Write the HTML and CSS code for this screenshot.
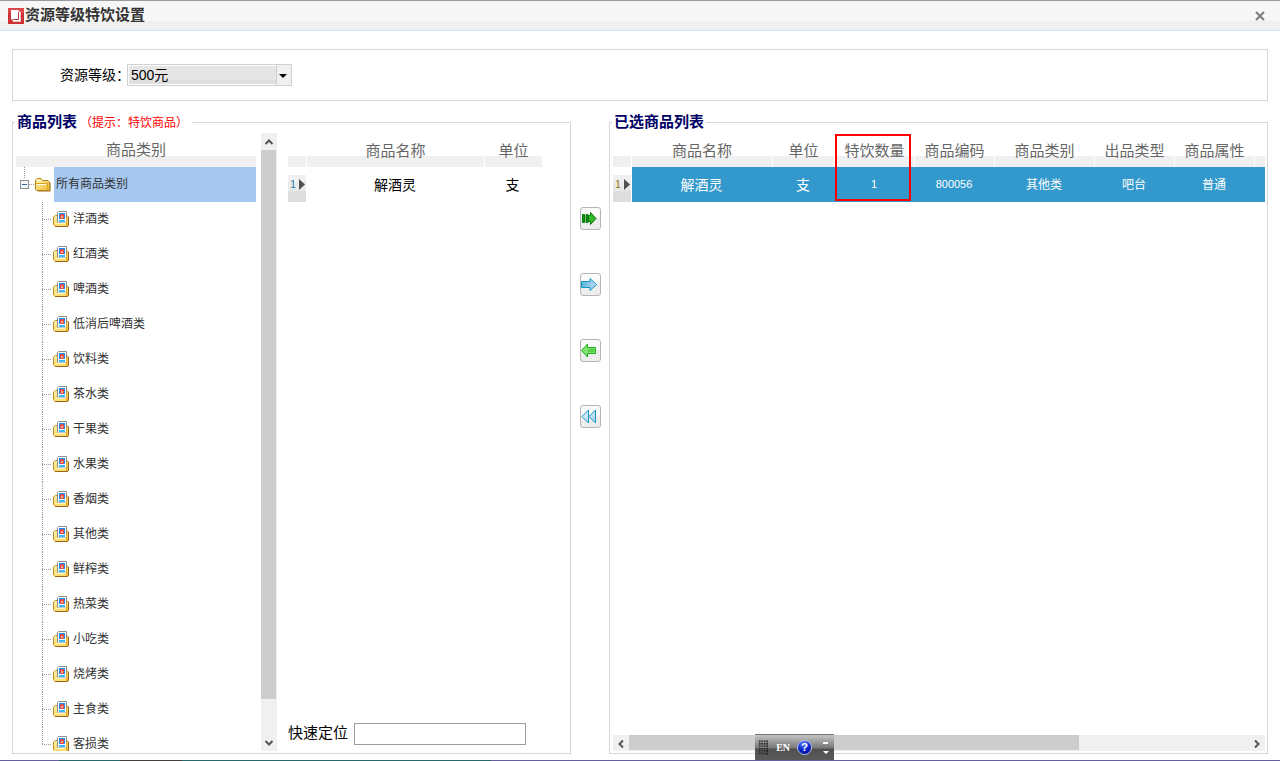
FILE: index.html
```html
<!DOCTYPE html>
<html lang="zh-CN">
<head>
<meta charset="utf-8">
<title>资源等级特饮设置</title>
<link rel="stylesheet" href="styles.css">
</head>
<body>
<svg width="0" height="0" class="defs" aria-hidden="true">
  <defs>
    <linearGradient id="gold" x1="0" y1="0" x2="1" y2="1"><stop offset="0" stop-color="#fff9b8"/><stop offset="1" stop-color="#f0b92c"/></linearGradient>
    <linearGradient id="sky" x1="0" y1="0" x2="1" y2="0"><stop offset="0" stop-color="#56b4d4"/><stop offset="1" stop-color="#c5dcf8"/></linearGradient>
    <linearGradient id="pale" x1="0" y1="0" x2="1" y2="1"><stop offset="0" stop-color="#e6f4fc"/><stop offset="1" stop-color="#a8cdf0"/></linearGradient>
    <symbol id="folder" viewBox="0 0 16 16">
      <path d="M2 13.500H14.500V5.500L15.500 6V14.500H3z" fill="#9a6c1c"/>
      <path d="M.5 12.500V3L2 1.500H6L7.500 3.500H13L14.500 5V13.500H1.500z" fill="url(#gold)" stroke="#b5831e"/>
      <path d="M1 6.500H12.500V12.500" fill="none" stroke="#dba726"/>
      <path d="M2 3.500H6M2 7.500H11" stroke="#fffde0"/>
    </symbol>
    <symbol id="category" viewBox="0 0 16 16">
      <path d="M.5 13.500V6L2.500 4.500H14L15.500 6V14L14.500 15.500H2z" fill="url(#gold)" stroke="#c08a20"/>
      <path d="M5.500 .5H13.500V12H4.500V1.500z" fill="#fff" stroke="#8c8c8c"/>
      <path d="M6 2H12V8H6z" fill="#1c8cf8"/>
      <path d="M7 4L8 3H10L11 4V7L10 8H8L7 7z" fill="#f04a38"/><path d="M8 5H10V7H8z" fill="#ffa090"/>
      <path d="M6 9H12V11H6z" fill="#38b8f4"/>
      <path d="M1 11H4L5 12H13V15H2L1 14z" fill="#ffdf70"/>
      <path d="M2 12.500H12" stroke="#fff6bd"/>
      <path d="M13.500 7V14" stroke="#e2b03c"/>
      <path d="M2 15.500H14.500L15.500 14.500V6" fill="none" stroke="#9a651b"/>
    </symbol>
    <symbol id="chev" viewBox="0 0 10 10"><path d="M1.500 7L5 3.500L8.500 7" fill="none" stroke="#555" stroke-width="2"/></symbol>
  </defs>
</svg>
<div class="window">
  <header class="titlebar">
    <svg class="logo" viewBox="0 0 16 16" aria-hidden="true"><path d="M0 0H16V16H0z" fill="#cf3236"/><path d="M0 0H16V5H0z" fill="#dc484a"/><path d="M3 2H10L12 4V13H5L3 11z" fill="#fff"/><path d="M10.500 4V11.500H4.500" fill="none" stroke="#b9383c"/><path d="M12.500 4V13.500H5" fill="none" stroke="#f1c6c6"/></svg>
    <h1 class="title">资源等级特饮设置</h1>
    <button class="close" type="button" aria-label="关闭"><svg viewBox="0 0 10 10"><path d="M1 1L9 9M9 1L1 9" stroke="#808080" stroke-width="2.200"/></svg></button>
  </header>
  <main class="content">
    <section class="filter">
      <label for="level">资源等级：</label>
      <div class="combo">
        <select id="level"><option>500元</option></select>
        <svg class="combo-arrow" viewBox="0 0 15 20" aria-hidden="true"><path d="M0 0H15V20H0z" fill="#f0f0f0"/><path d="M.5 0V20" stroke="#d0d0d0"/><path d="M3 9H11L7 13z" fill="#000"/></svg>
      </div>
    </section>
    <div class="panels">
      <fieldset class="panel source">
        <legend>商品列表<span class="hint">（提示：特饮商品）</span></legend>
        <div class="source-body">
          <div class="tree">
            <div class="tree-head">商品类别</div>
            <div class="tree-root"><svg class="root-branch" viewBox="0 0 19 35" aria-hidden="true"><path d="M8.500 0V12M13 17.500H18" fill="none" stroke="#999" stroke-dasharray="1 1"/><rect x="4.500" y="13.500" width="8" height="8" fill="#f5f7f9" stroke="#8c9096"/><path d="M6 17.500H11" stroke="#345e9e"/></svg><svg class="icon" aria-hidden="true"><use href="#folder"/></svg><span class="root-name">所有商品类别</span></div>
            <ul class="tree-list">
              <li><svg class="icon" aria-hidden="true"><use href="#category"/></svg>洋酒类</li>
              <li><svg class="icon" aria-hidden="true"><use href="#category"/></svg>红酒类</li>
              <li><svg class="icon" aria-hidden="true"><use href="#category"/></svg>啤酒类</li>
              <li><svg class="icon" aria-hidden="true"><use href="#category"/></svg>低消后啤酒类</li>
              <li><svg class="icon" aria-hidden="true"><use href="#category"/></svg>饮料类</li>
              <li><svg class="icon" aria-hidden="true"><use href="#category"/></svg>茶水类</li>
              <li><svg class="icon" aria-hidden="true"><use href="#category"/></svg>干果类</li>
              <li><svg class="icon" aria-hidden="true"><use href="#category"/></svg>水果类</li>
              <li><svg class="icon" aria-hidden="true"><use href="#category"/></svg>香烟类</li>
              <li><svg class="icon" aria-hidden="true"><use href="#category"/></svg>其他类</li>
              <li><svg class="icon" aria-hidden="true"><use href="#category"/></svg>鲜榨类</li>
              <li><svg class="icon" aria-hidden="true"><use href="#category"/></svg>热菜类</li>
              <li><svg class="icon" aria-hidden="true"><use href="#category"/></svg>小吃类</li>
              <li><svg class="icon" aria-hidden="true"><use href="#category"/></svg>烧烤类</li>
              <li><svg class="icon" aria-hidden="true"><use href="#category"/></svg>主食类</li>
              <li><svg class="icon" aria-hidden="true"><use href="#category"/></svg>客损类</li>
            </ul>
          </div>
          <div class="vscroll" aria-hidden="true">
            <span class="arrow"><svg><use href="#chev"/></svg></span>
            <span class="track"><span class="thumb"></span></span>
            <span class="arrow down"><svg><use href="#chev"/></svg></span>
          </div>
          <div class="goods">
            <table class="grid">
              <colgroup><col class="w-mark"><col class="w-goods"><col class="w-goods-unit"></colgroup>
              <thead><tr><th></th><th>商品名称</th><th>单位</th></tr></thead>
              <tbody><tr><td class="mark"><span class="marker"><span class="num">1</span><svg viewBox="0 0 6 11"><path d="M0 0L6 5.500L0 11z" fill="#505050"/></svg></span></td><td>解酒灵</td><td>支</td></tr></tbody>
            </table>
            <div class="locate"><label for="quick">快速定位</label><input id="quick" type="text"></div>
          </div>
        </div>
      </fieldset>
      <div class="transfer">
        <button type="button" aria-label="添加"><svg viewBox="0 0 17 17"><path d="M1.500 4.500H3.500V12.500H1.500zM5 4.500H7V12.500H5z" fill="#0a9410" stroke="#067a0a"/><path d="M7.500 5.500H9.500V2.500L15 8.500L9.500 14.500V11.500H7.500z" fill="#36b62c" stroke="#087c0c"/></svg></button>
        <button type="button" aria-label="全部添加"><svg viewBox="0 0 17 17"><path d="M.5 5.500H9V2.500L15.500 8.500L9 14.500V11.500H.5z" fill="url(#sky)" stroke="#1598c4"/></svg></button>
        <button type="button" aria-label="移除"><svg viewBox="0 0 17 17"><path d="M14.500 5.500H6.500V2L.5 8.500L6.500 15V11.500H14.500z" fill="#80e070" stroke="#18ae1c"/><path d="M7 7H13V10H7z" fill="#58d043"/></svg></button>
        <button type="button" aria-label="全部移除"><svg viewBox="0 0 17 17"><path d="M7.500 2V15L1 8.500zM14.500 2V15L8 8.500z" fill="url(#pale)" stroke="#1598c4"/></svg></button>
      </div>
      <fieldset class="panel chosen">
        <legend>已选商品列表</legend>
        <div class="chosen-body">
          <table class="grid">
            <colgroup><col class="w-mark"><col class="w-name"><col class="w-unit"><col class="w-80"><col class="w-80"><col class="w-100"><col class="w-80"><col class="w-80"><col class="w-rest"></colgroup>
            <thead><tr><th></th><th>商品名称</th><th>单位</th><th class="key">特饮数量<span class="outline"></span></th><th>商品编码</th><th>商品类别</th><th>出品类型</th><th>商品属性</th><th></th></tr></thead>
            <tbody><tr class="selected"><td class="mark"><span class="marker"><span class="num gold">1</span><svg viewBox="0 0 6 11"><path d="M0 0L6 5.500L0 11z" fill="#505050"/></svg></span></td><td>解酒灵</td><td>支</td><td class="digits">1</td><td class="digits">800056</td><td class="small">其他类</td><td class="small">吧台</td><td class="small">普通</td><td></td></tr></tbody>
          </table>
          <div class="hscroll" aria-hidden="true">
            <span class="arrow left"><svg><use href="#chev"/></svg></span>
            <span class="track"><span class="thumb"></span></span>
            <span class="arrow right"><svg><use href="#chev"/></svg></span>
          </div>
        </div>
      </fieldset>
    </div>
  </main>
  <div class="desktop-edge"></div>
  <div class="langbar">
    <svg class="grip" viewBox="0 0 11 17" aria-hidden="true"><path d="M1 0V17M4 0V17M7 0V17M10 0V17" stroke="#222" stroke-width="2" stroke-dasharray="2 1"/><path d="M1.500 1V17M4.500 1V17M7.500 1V17" stroke="#8a8a8a" stroke-dasharray="1 2"/></svg>
    <span class="lang">EN</span>
    <button class="help" type="button" aria-label="帮助">?</button>
    <svg class="bar-menu" viewBox="0 0 6 14" aria-hidden="true"><path d="M0 1H5V3H0zM0 10H6L3 13z" fill="#fff"/></svg>
  </div>
</div>
</body>
</html>
```
FILE: styles.css
```css
* { box-sizing: border-box; }
body {
  margin: 0;
  background: #fff;
  color: #000;
  font-family: "Liberation Sans", "Noto Sans CJK SC", sans-serif;
  font-size: 14px;
}
button, input, select { font: inherit; }
svg { display: block; }
.defs { position: absolute; }
.window {
  position: relative;
  display: flex;
  flex-direction: column;
  height: 100vh;
}

/* Title bar */
.titlebar {
  display: flex;
  align-items: center;
  height: 31px;
  padding: 0 15px 0 8px;
  border-top: 1px solid #9c9ba3;
  border-bottom: 1px solid #caebfd;
  background: linear-gradient(#f7f7f7 20px, #f0f0f0 20px);
}
.logo { width: 16px; height: 16px; }
.title {
  flex: 1;
  margin: 0 0 0 1px;
  padding-bottom: 2px;
  color: #333;
  font-size: 15px;
  line-height: 20px;
}
.close {
  width: 10px;
  height: 10px;
  padding: 0;
  border: 0;
  background: none;
}

/* Level filter */
.content {
  display: flex;
  flex: 1;
  flex-direction: column;
  min-height: 0;
  padding: 18px 12px 6px;
}
.filter {
  display: flex;
  align-items: center;
  height: 52px;
  padding-left: 47px;
  border: 1px solid #d6d6d6;
}
.filter label { width: 67px; padding-bottom: 2px; white-space: nowrap; }
.combo { position: relative; width: 165px; height: 22px; }
.combo select {
  width: 100%;
  height: 22px;
  padding: 0 20px 0 3px;
  border: 1px solid #d0d0d0;
  border-radius: 0;
  appearance: none;
  background: linear-gradient(#e5e5e5 15px, #dfdfdf 15px);
  box-shadow: inset 0 0 0 1px #fff;
  color: #000;
}
.combo-arrow {
  position: absolute;
  top: 1px;
  right: 1px;
  width: 15px;
  height: 20px;
  pointer-events: none;
}

/* Panels */
.panels {
  display: flex;
  flex: 1;
  min-height: 0;
  padding-top: 11px;
}
.panel {
  display: flex;
  min-width: 0;
  min-height: 0;
  margin: 0;
  padding: 0 2px 2px;
  border: 1px solid #d6d6d6;
}
.source { flex: 559 1 559px; }
.chosen { flex: 659 1 659px; }
legend {
  height: 21px;
  padding: 0 2px;
  color: #000066;
  font-size: 15px;
  font-weight: bold;
  line-height: 20px;
}
.hint {
  padding: 0 2px 0 3px;
  color: #f00;
  font-size: 12px;
  font-weight: normal;
  line-height: 12px;
}
.source-body {
  display: flex;
  flex: 1;
  min-width: 0;
  min-height: 0;
  padding-left: 1px;
}

/* Category tree */
.tree {
  flex: 240 1 240px;
  min-height: 0;
  overflow: hidden;
  color: #333;
  font-size: 12px;
}
.tree-head {
  height: 34px;
  background: linear-gradient(#fff 23px, #f0f0f0 23px);
  color: #666;
  font-size: 15px;
  line-height: 34px;
  text-align: center;
}
.tree-root { display: flex; align-items: center; height: 35px; }
.root-branch { width: 19px; height: 35px; }
.icon { flex: none; width: 16px; height: 16px; }
.root-name {
  flex: 1;
  margin-left: 3px;
  padding-left: 2px;
  background: #a6c8f0;
  line-height: 35px;
}
.tree-list { margin: 0; padding: 0 0 0 26px; list-style: none; }
.tree-list li {
  display: flex;
  align-items: center;
  gap: 4px;
  height: 35px;
  padding: 0 0 2px 11px;
  background:
    repeating-linear-gradient(#999 0 1px, transparent 1px 2px) 0 0 / 1px 100% no-repeat,
    repeating-linear-gradient(90deg, #999 0 1px, transparent 1px 2px) 0 17px / 9px 1px no-repeat;
  line-height: 14px;
}
.tree-list li:last-child { background-size: 1px 17px, 9px 1px; }

/* Scroll bars */
.vscroll {
  display: flex;
  flex: none;
  flex-direction: column;
  width: 16px;
  margin: 0 11px 0 5px;
  background: #f0f0f0;
}
.arrow { display: grid; place-items: center; width: 16px; height: 17px; }
.arrow svg { width: 10px; height: 10px; }
.down svg { transform: rotate(180deg); }
.left svg { transform: rotate(-90deg); }
.right svg { transform: rotate(90deg); }
.track { flex: 1; }
.thumb { display: block; background: #cdcdcd; }
.vscroll .thumb { width: 15px; height: 94%; }
.hscroll { display: flex; height: 16px; background: #f0f0f0; }
.hscroll .thumb { width: 72.500%; height: 15px; }

/* Product grids */
.goods {
  display: flex;
  flex: 254 1 254px;
  flex-direction: column;
  justify-content: space-between;
  margin-right: 26px;
}
.grid {
  width: 100%;
  border-spacing: 0;
  table-layout: fixed;
}
.w-mark { width: 19px; }
.w-goods { width: 178px; }
.w-goods-unit { width: 57px; }
.w-name { width: 141px; }
.w-unit { width: 62px; }
.w-80 { width: 80px; }
.w-100 { width: 100px; }
.w-rest { width: 10px; }
.grid th {
  height: 34px;
  padding: 0 0 2px;
  border-right: 1px solid #fff;
  background: linear-gradient(#fff 23px, #f0f0f0 23px);
  color: #666;
  font-size: 15px;
  font-weight: normal;
  white-space: nowrap;
}
.grid th:last-child { border-right: 0; }
.grid td { height: 35px; padding: 0 2px 2px 0; text-align: center; }
.grid .mark { padding: 0 1px 0 0; background: #fff; vertical-align: bottom; }
.marker {
  display: flex;
  align-items: flex-start;
  gap: 3px;
  height: 27px;
  padding: 4px 1px 0 2px;
  background: linear-gradient(#f0f0f0 7px, #e9e9e9 7px 16px, #dedede 16px);
}
.num { width: 6px; color: #1878a8; font-size: 10px; line-height: 11px; }
.gold { color: #937000; }
.marker svg { width: 6px; height: 11px; }
.grid .selected td { color: #fff; }
.grid .selected td:not(.mark) { background: #3399cc; }
.grid .small { font-size: 12px; }
.grid .digits { font-size: 11px; }
.grid .key { position: relative; }
.outline {
  position: absolute;
  top: 1px;
  left: 0;
  z-index: 1;
  width: 76px;
  height: 67px;
  border: 2px solid #f00;
}
.locate {
  display: flex;
  align-items: center;
  gap: 6px;
  margin-bottom: 6px;
  font-size: 15px;
}
.locate label { padding-bottom: 2px; line-height: 20px; }
.locate input {
  width: 172px;
  height: 22px;
  padding: 0 4px;
  border: 1px solid #9c9ba0;
  background: #fff;
}
.chosen-body {
  display: flex;
  flex: 1;
  flex-direction: column;
  justify-content: space-between;
  min-width: 0;
  padding-left: 1px;
}

/* Transfer buttons */
.transfer {
  display: flex;
  flex: none;
  flex-direction: column;
  align-items: center;
  gap: 43px;
  width: 38px;
  padding-top: 95px;
}
.transfer button {
  width: 21px;
  height: 23px;
  padding: 0 2px 1px 0;
  border: 1px solid #b5b5b5;
  border-radius: 3px;
  background: linear-gradient(#fafafa 10px, #ededed 10px);
}
.transfer svg { width: 17px; height: 17px; }

/* Desktop strip and language bar */
.desktop-edge {
  height: 1px;
  background: linear-gradient(90deg, #665f9b 59px, #276768 59px 120px, #433f3f 120px 182px, #276768 182px 491px, #665f9b 491px);
}
.langbar {
  position: absolute;
  bottom: 1px;
  left: 59%;
  display: flex;
  align-items: center;
  width: 79px;
  height: 26px;
  padding: 0 5px 0 4px;
  border-top: 1px solid #757575;
  background: linear-gradient(#c4c4c4, #777 13px, #505050 14px, #5a5a5a);
  color: #fff;
}
.grip { width: 9px; height: 17px; }
.lang {
  margin-left: 8px;
  font-family: "Liberation Serif", serif;
  font-size: 10px;
  font-weight: bold;
}
.help {
  width: 15px;
  height: 15px;
  margin-left: 7px;
  padding: 0;
  border: 1px solid #b7c4ed;
  border-radius: 50%;
  background: radial-gradient(circle at 40% 20%, #5a86f5, #0a24cc 50%, #000c70);
  color: #fff;
  font-size: 11px;
  font-weight: bold;
  line-height: 13px;
}
.bar-menu { width: 6px; height: 14px; margin-left: auto; }
```
